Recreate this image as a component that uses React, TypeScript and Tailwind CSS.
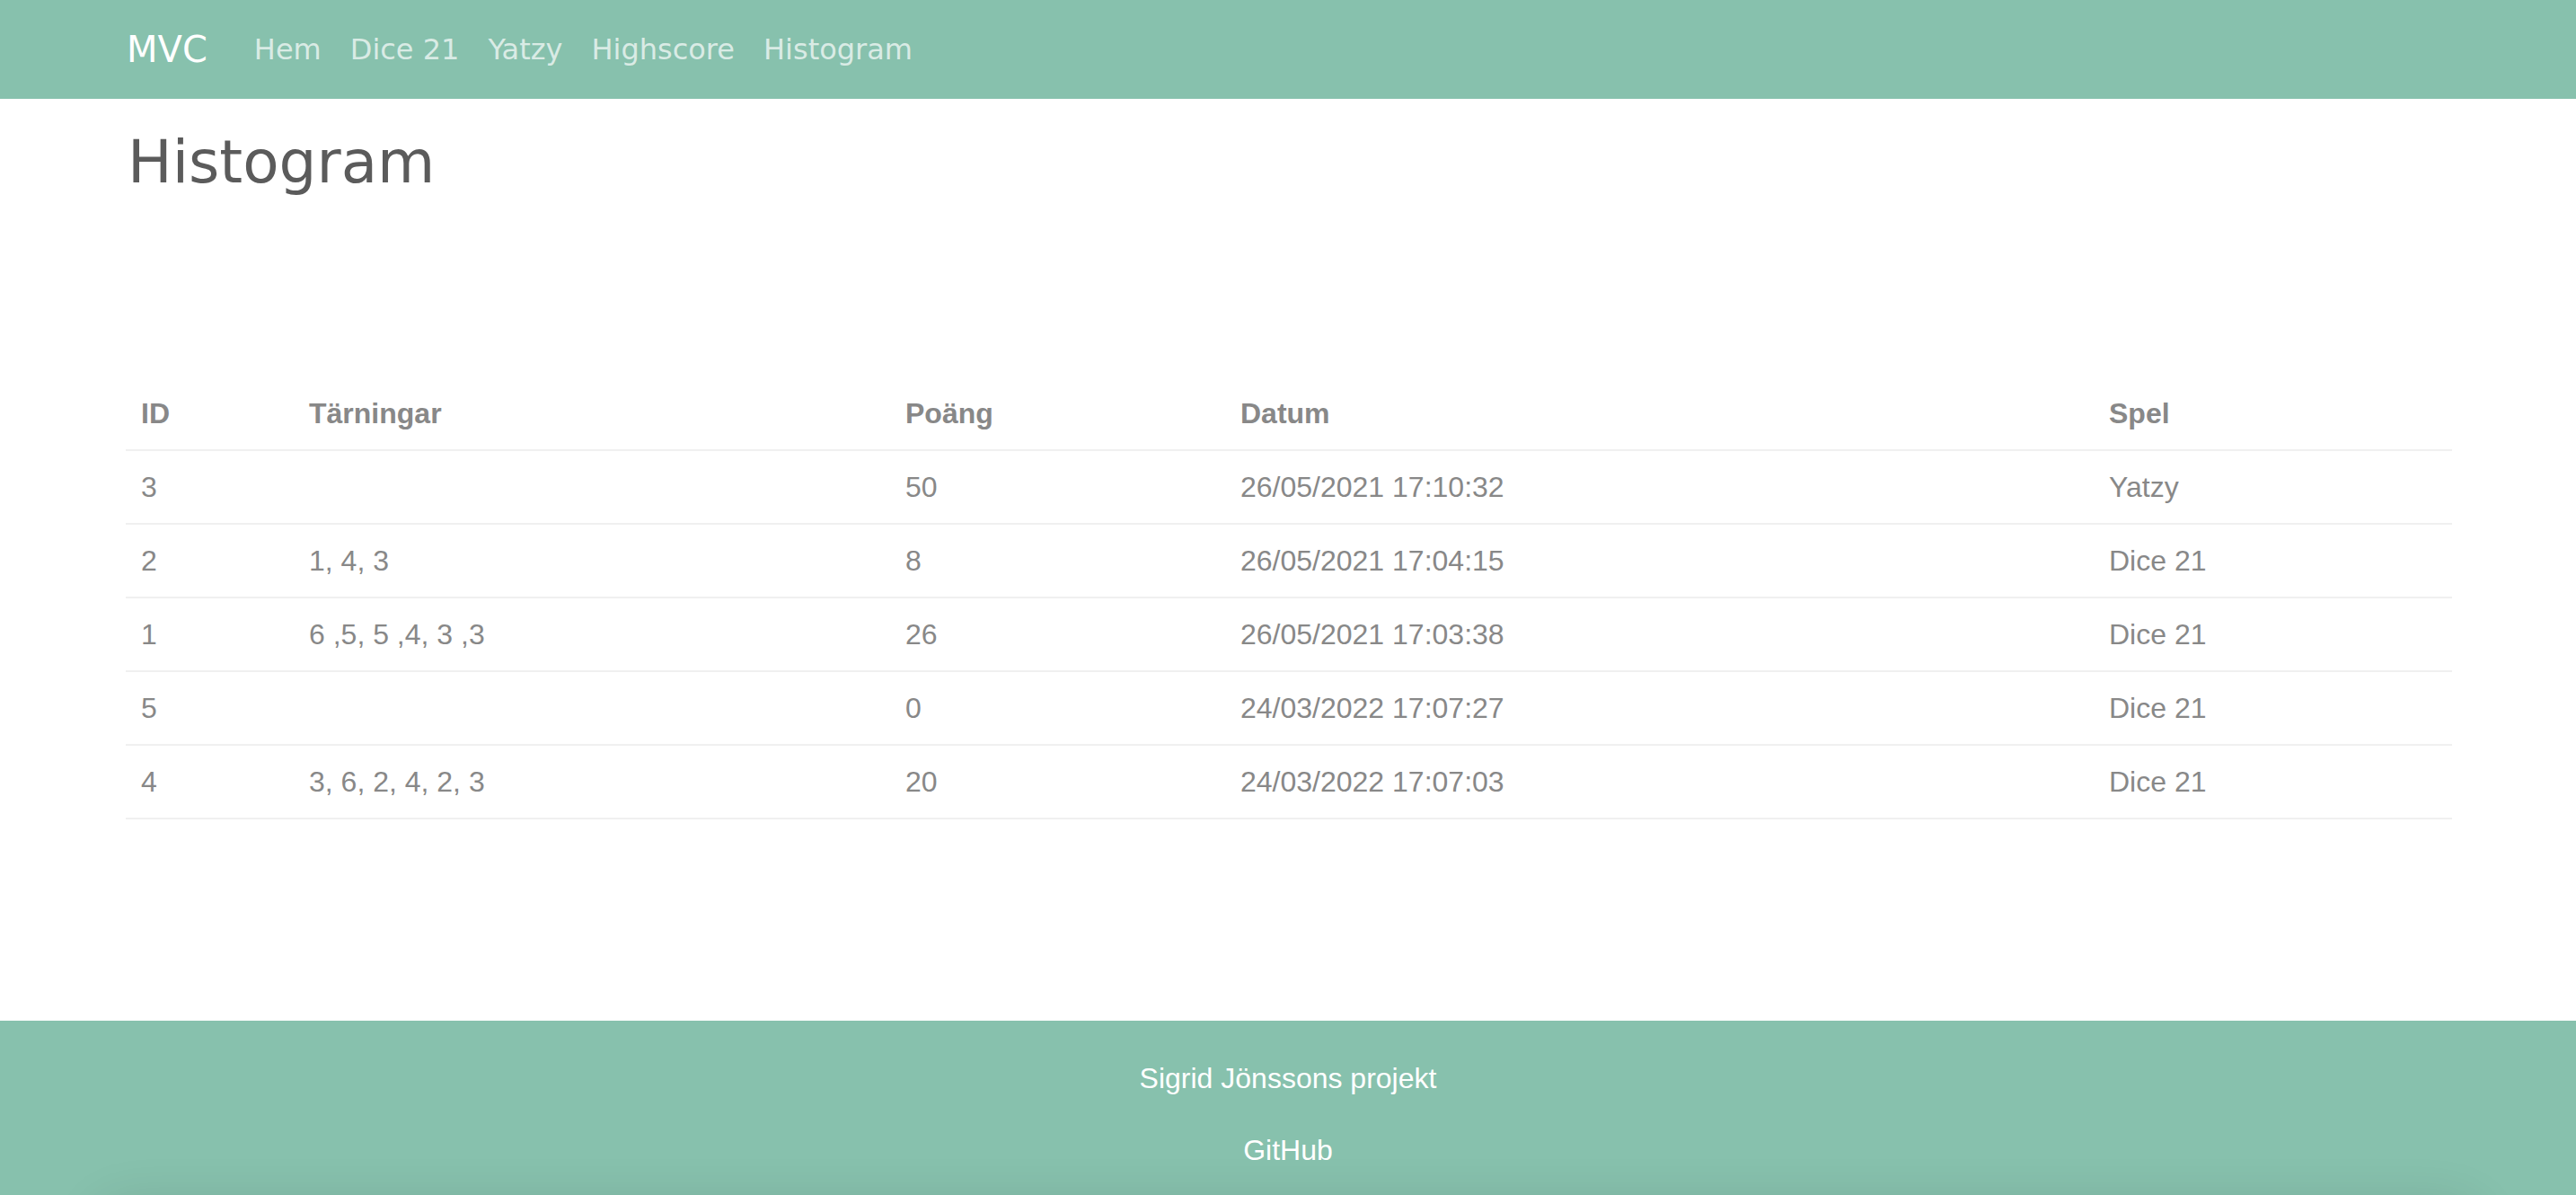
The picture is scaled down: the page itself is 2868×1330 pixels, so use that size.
const navLinks = ["Hem", "Dice 21", "Yatzy", "Highscore", "Histogram"];

const rows = [
  { id: "3", dice: "", score: "50", date: "26/05/2021 17:10:32", game: "Yatzy" },
  { id: "2", dice: "1, 4, 3", score: "8", date: "26/05/2021 17:04:15", game: "Dice 21" },
  { id: "1", dice: "6 ,5, 5 ,4, 3 ,3", score: "26", date: "26/05/2021 17:03:38", game: "Dice 21" },
  { id: "5", dice: "", score: "0", date: "24/03/2022 17:07:27", game: "Dice 21" },
  { id: "4", dice: "3, 6, 2, 4, 2, 3", score: "20", date: "24/03/2022 17:07:03", game: "Dice 21" },
];

export default function App() {
  return (
    <div className="min-h-screen overflow-hidden bg-white font-['Liberation_Sans',Arial,sans-serif]">
      {/* Navbar */}
      <nav className="h-[110px] bg-[#87c1ad]">
        <div className="mx-auto flex h-full w-[2592px] items-center font-['DejaVu_Sans',sans-serif]">
          <a className="mr-[36px] pl-[3px] text-[40px] leading-none text-white">MVC</a>
          <ul className="flex">
            {navLinks.map((link) => (
              <li key={link}>
                <a className="block px-[16px] text-[32px] leading-none text-white/70">{link}</a>
              </li>
            ))}
          </ul>
        </div>
      </nav>

      {/* Main */}
      <main className="mx-auto w-[2592px]">
        <h1 className="mt-[31px] pl-[4px] font-['DejaVu_Sans',sans-serif] text-[66px] leading-[1.2] text-[#5b5b5b]">
          Histogram
        </h1>

        <table className="mt-[200px] ml-[2px] w-[2590px] table-fixed border-collapse text-[32px] leading-[48px] text-[#888]">
          <colgroup>
            <col className="w-[187px]" />
            <col className="w-[664px]" />
            <col className="w-[373px]" />
            <col className="w-[967px]" />
            <col className="w-[399px]" />
          </colgroup>
          <thead>
            <tr className="border-b-2 border-[#f0f0f0]">
              <th className="px-[17px] py-4 text-left font-bold">ID</th>
              <th className="px-[17px] py-4 text-left font-bold">Tärningar</th>
              <th className="px-[17px] py-4 text-left font-bold">Poäng</th>
              <th className="px-[17px] py-4 text-left font-bold">Datum</th>
              <th className="px-[17px] py-4 text-left font-bold">Spel</th>
            </tr>
          </thead>
          <tbody>
            {rows.map((row) => (
              <tr key={row.id} className="border-b-2 border-[#f0f0f0]">
                <td className="px-[17px] py-4">{row.id}</td>
                <td className="px-[17px] py-4">{row.dice}</td>
                <td className="px-[17px] py-4">{row.score}</td>
                <td className="px-[17px] py-4">{row.date}</td>
                <td className="px-[17px] py-4">{row.game}</td>
              </tr>
            ))}
          </tbody>
        </table>
      </main>

      {/* Footer */}
      <footer className="mt-[224px] bg-[#87c1ad] pt-[40px] text-center text-[32px] leading-[48px] text-white">
        <p>Sigrid Jönssons projekt</p>
        <p className="mt-[32px]">
          <a>GitHub</a>
        </p>
        <div className="mx-[110px] mt-[40px] h-[60px] rounded-[40px] bg-[#87c1ad] shadow-[0_0_60px_rgba(0,0,0,0.14)]" />
      </footer>
    </div>
  );
}
